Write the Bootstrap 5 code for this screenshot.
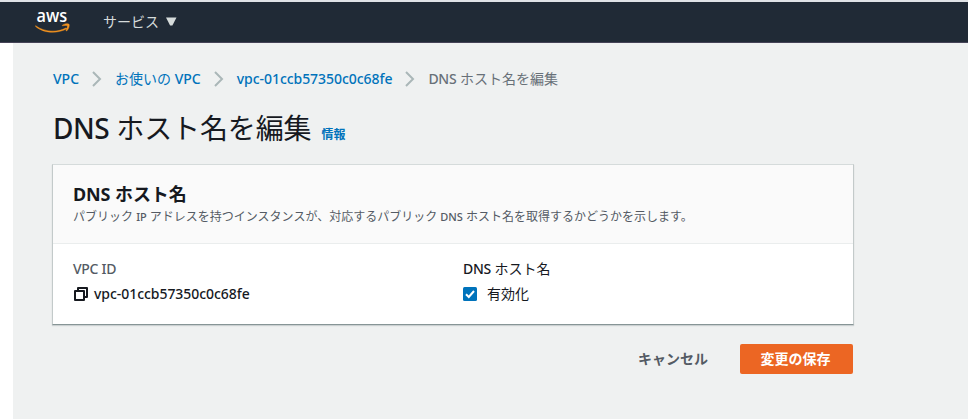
<!DOCTYPE html>
<html lang="ja">
<head>
<meta charset="utf-8">
<meta name="viewport" content="width=device-width, initial-scale=1">
<title>DNS ホスト名を編集</title>
<link href="https://cdn.jsdelivr.net/npm/bootstrap@5.3.0/dist/css/bootstrap.min.css" rel="stylesheet">
<style>
body{font-family:"Noto Sans","Noto Sans CJK JP",sans-serif;font-size:14px;line-height:20px;color:#16191f;background:#fff;overflow:hidden}
.topbar{height:43px;background:#202a36;border-top:2px solid #dfe2e6;border-bottom:1px solid #454357;padding:0 0 0 35px;color:#d5dbdb}
.brand{width:34px;height:30px;margin-right:34px;overflow:visible}
.services{margin-top:-1px}
.services svg{margin-left:7px}
.page{margin-left:13px;height:376px;background:#eff1f1;padding:26px 0 0 40px}
.content{width:801px}
.crumbs{height:20px}
.crumbs a,.info{color:#0073bb;text-decoration:none}
.crumbs svg{margin:0 13px 0 12px;flex:none}
.crumbs .current{color:#687078}
.en{font-weight:500}
.vpc{letter-spacing:-.05px}
.current .en{letter-spacing:-.3px}
h1{font-size:28px;line-height:36px;font-weight:400;letter-spacing:-.12px;margin:21px 0 1px}
h1 .en{letter-spacing:-.5px}
.info{font-size:12px;font-weight:700;line-height:16px;margin:38px 0 0 10px}
.panel{width:802px;height:161px;margin:17px 0 0 -1px;background:#fff;border:1px solid #d5dbdb;border-left-color:#c3caca;border-right-color:#c3caca;border-bottom-color:#879596;box-shadow:0 1px 1px rgba(0,28,36,.15)}
.panel-head{height:79px;background:#fafafa;border-bottom:1px solid #eaeded;padding:18px 19px 0 20px}
h2{font-size:18px;line-height:22px;font-weight:700;margin:0;letter-spacing:-.1px}
.desc{font-size:12px;line-height:18px;color:#545b64;margin:3px 0 0;white-space:nowrap}
.desc .en{font-size:11px}
.panel-body{padding:15px 20px 0}
.panel-body>div{flex:0 0 390px}
.label{color:#545b64}
.label .en{letter-spacing:-.3px}
.value{margin-top:5px}
.copy{margin-right:5px}
.tick{width:14px;height:14px;margin-right:10px}
.actions{margin-top:19px;height:30px}
.actions .btn{height:30px;border:0;border-radius:2px;padding:0;font-size:14px;line-height:30px;font-weight:700;white-space:nowrap}
.actions .btn-plain{color:#545b64;width:112px}
.actions .btn-save{background:#ec6623;color:#fff;width:113px;margin:0 1px 0 11px;padding-right:2px}
</style>
</head>
<body>
<nav class="topbar d-flex align-items-center">
<svg class="brand" viewBox="0 0 34 30" role="img" aria-label="aws"><text x="1.6" y="15.2" textLength="30.6" lengthAdjust="spacingAndGlyphs" font-family="Open Sans, sans-serif" font-size="18" font-weight="600" fill="#fff">aws</text><path transform="translate(.6 .4)" d="M0 18.3C9 25 22 25.3 30.3 20.6L31.2 21.4C22 26.3 8 26.2 0 19ZM26.6 18C29 16 32.8 16 33.5 16.9C34.1 18.2 33 22 31 23.6C30.6 23.8 30.3 23.6 30.5 23.2C31.4 20.9 32 19.1 31.7 18.4C31 17.8 29 18 26.8 18.4Z" fill="#f7941e" stroke="#f7941e" stroke-width=".5"/></svg>
<div class="services d-flex align-items-center"><span>サービス</span><svg width="11" height="9" viewBox="0 0 11 9"><path d="M0 .5h10.5L6.4 8.5H4.1Z" fill="#d5dbdb"/></svg></div>
</nav>
<main class="page">
<div class="content">
<nav class="crumbs d-flex align-items-center text-nowrap" aria-label="breadcrumb">
<a href="#"><span class="en">VPC</span></a>
<svg width="11" height="16" viewBox="0 0 11 16"><path d="M2 1l7 7-7 7" fill="none" stroke="#aab7b8" stroke-width="2"/></svg>
<a href="#">お使いの <span class="en">VPC</span></a>
<svg width="11" height="16" viewBox="0 0 11 16"><path d="M2 1l7 7-7 7" fill="none" stroke="#aab7b8" stroke-width="2"/></svg>
<a href="#"><span class="en vpc">vpc-01ccb57350c0c68fe</span></a>
<svg width="11" height="16" viewBox="0 0 11 16"><path d="M2 1l7 7-7 7" fill="none" stroke="#aab7b8" stroke-width="2"/></svg>
<span class="current"><span class="en">DNS</span> ホスト名を編集</span>
</nav>
<div class="d-flex"><h1><span class="en">DNS</span> ホスト名を編集</h1><a class="info" href="#">情報</a></div>
<section class="panel">
<header class="panel-head"><h2>DNS ホスト名</h2><p class="desc">パブリック <span class="en">IP</span> アドレスを持つインスタンスが、対応するパブリック <span class="en">DNS</span> ホスト名を取得するかどうかを示します。</p></header>
<div class="panel-body d-flex">
<div><div class="label"><span class="en">VPC ID</span></div><div class="value d-flex align-items-center"><svg class="copy" width="16" height="16" viewBox="0 0 16 16" fill="none" stroke="#16191f" stroke-width="2"><path d="M2 5h9v9H2ZM5 5V2h9v9h-3" stroke-linejoin="round"/></svg><span class="en vpc">vpc-01ccb57350c0c68fe</span></div></div>
<div><div class="label text-reset"><span class="en">DNS</span> ホスト名</div><div class="value d-flex align-items-center"><svg class="tick" viewBox="0 0 14 14" role="checkbox" aria-checked="true"><rect width="14" height="14" rx="1.5" fill="#0073bb"/><path d="M3 7.2l2.8 2.8L11 4" fill="none" stroke="#fff" stroke-width="2"/></svg><span>有効化</span></div></div>
</div>
</section>
<div class="actions d-flex justify-content-end"><button class="btn btn-plain">キャンセル</button><button class="btn btn-save">変更の保存</button></div>
</div>
</main>
<script src="https://cdn.jsdelivr.net/npm/bootstrap@5.3.0/dist/js/bootstrap.bundle.min.js"></script>
</body>
</html>
